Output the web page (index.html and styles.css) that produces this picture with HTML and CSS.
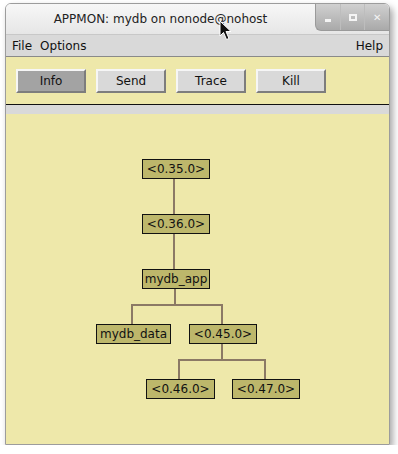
FILE: index.html
```html
<!DOCTYPE html>
<html lang="en">
<head>
  <meta charset="UTF-8">
  <title>APPMON: mydb on nonode@nohost</title>
  <link rel="stylesheet" href="styles.css">
</head>
<body>
  <div class="window">
    <div class="titlebar">
      <div class="title">APPMON: mydb on nonode@nohost</div>
      <div class="controls">
        <span class="ctl min"></span>
        <span class="ctl max"></span>
        <span class="ctl close">&#x2715;</span>
      </div>
    </div>
    <div class="menubar">
      <span class="menu">File</span>
      <span class="menu">Options</span>
      <span class="menu help">Help</span>
    </div>
    <div class="toolbar">
      <button class="btn active">Info</button>
      <button class="btn">Send</button>
      <button class="btn">Trace</button>
      <button class="btn">Kill</button>
    </div>
    <div class="separator"></div>
    <div class="canvas">
      <svg class="edges" width="382" height="330">
        <g stroke="#8b7965" stroke-width="2" fill="none">
          <line x1="168" y1="65" x2="168" y2="100"/>
          <line x1="168" y1="120" x2="168" y2="155"/>
          <line x1="169" y1="175" x2="169" y2="191"/>
          <polyline points="126,210 126,191 216,191 216,210"/>
          <line x1="216" y1="230" x2="216" y2="246"/>
          <polyline points="173,265 173,246 259,246 259,265"/>
        </g>
      </svg>
      <div class="node" style="left:136px;top:45px;width:66px">&lt;0.35.0&gt;</div>
      <div class="node" style="left:136px;top:100px;width:66px">&lt;0.36.0&gt;</div>
      <div class="node" style="left:136px;top:155px;width:66px">mydb_app</div>
      <div class="node" style="left:90px;top:210px;width:73px">mydb_data</div>
      <div class="node" style="left:183px;top:210px;width:66px">&lt;0.45.0&gt;</div>
      <div class="node" style="left:140px;top:265px;width:67px">&lt;0.46.0&gt;</div>
      <div class="node" style="left:226px;top:265px;width:66px">&lt;0.47.0&gt;</div>
    </div>
  </div>
  <svg class="cursor" width="14" height="22" viewBox="0 0 14 22">
    <path d="M1 1 L1 16 L4.5 12.5 L7.5 19.5 L10 18.5 L7 11.5 L12 11.5 Z" fill="#111" stroke="#fff" stroke-width="1"/>
  </svg>
</body>
</html>
```

FILE: styles.css
```css
body {
  margin: 0;
  background: #fff;
  font-family: 'DejaVu Sans', sans-serif;
  position: relative;
}
.window {
  margin: 3px 0 0 5px;
  width: 383px;
  border: 1px solid #9c9c9c;
  border-radius: 6px 6px 0 0;
  box-shadow: 3px 4px 7px rgba(0, 0, 0, 0.35);
  overflow: hidden;
}
.titlebar {
  display: flex;
  height: 30px;
  background: linear-gradient(#f7f7f7, #e6e6e6);
}
.title {
  flex: 1;
  text-align: center;
  font-size: 12px;
  line-height: 30px;
  color: #222;
}
.controls {
  display: flex;
  width: 73px;
  height: 26px;
  background: linear-gradient(#d0d0d0, #a9a9a9);
  border-left: 1px solid #9a9a9a;
  border-bottom: 1px solid #9a9a9a;
  border-radius: 0 0 0 6px;
}
.ctl {
  flex: 1;
  display: flex;
  align-items: center;
  justify-content: center;
  color: #f4f4f4;
  font-size: 10px;
  font-weight: bold;
  border-right: 1px solid #bdbdbd;
}
.ctl:last-child {
  border-right: none;
}
.ctl.min::before {
  content: '';
  width: 6px;
  height: 3px;
  background: #f4f4f4;
  margin-top: 6px;
}
.ctl.max::before {
  content: '';
  width: 4px;
  height: 3px;
  border: 2px solid #f4f4f4;
}
.menubar {
  display: flex;
  height: 21px;
  align-items: center;
  background: #d9d9d9;
  border-top: 1px solid #c8c8c8;
  border-bottom: 1px solid #8a8a8a;
  padding: 0 6px;
  font-size: 12px;
  color: #111;
}
.menu {
  margin-right: 8px;
}
.menu.help {
  margin-left: auto;
  margin-right: 0;
}
.toolbar {
  display: flex;
  gap: 10px;
  background: #eee8aa;
  padding: 12px 10px 11px;
}
.btn {
  width: 70px;
  height: 24px;
  padding: 0;
  background: #d9d9d9;
  border: 2px solid;
  border-color: #f6f6f6 #7d7d7d #7d7d7d #f6f6f6;
  font-family: 'DejaVu Sans', sans-serif;
  font-size: 12px;
  color: #111;
}
.btn.active {
  background: #a3a3a3;
}
.separator {
  height: 9px;
  background: #d9d9d9;
  border-top: 1px solid #111;
}
.canvas {
  position: relative;
  height: 330px;
  background: #eee8aa;
}
.edges {
  position: absolute;
  left: 0;
  top: 0;
}
.node {
  position: absolute;
  height: 18px;
  box-sizing: content-box;
  border: 1px solid #111;
  background: #bdb76b;
  font-size: 12px;
  line-height: 18px;
  text-align: center;
  color: #111;
  white-space: nowrap;
}
.cursor {
  position: absolute;
  left: 219px;
  top: 20px;
}
```
